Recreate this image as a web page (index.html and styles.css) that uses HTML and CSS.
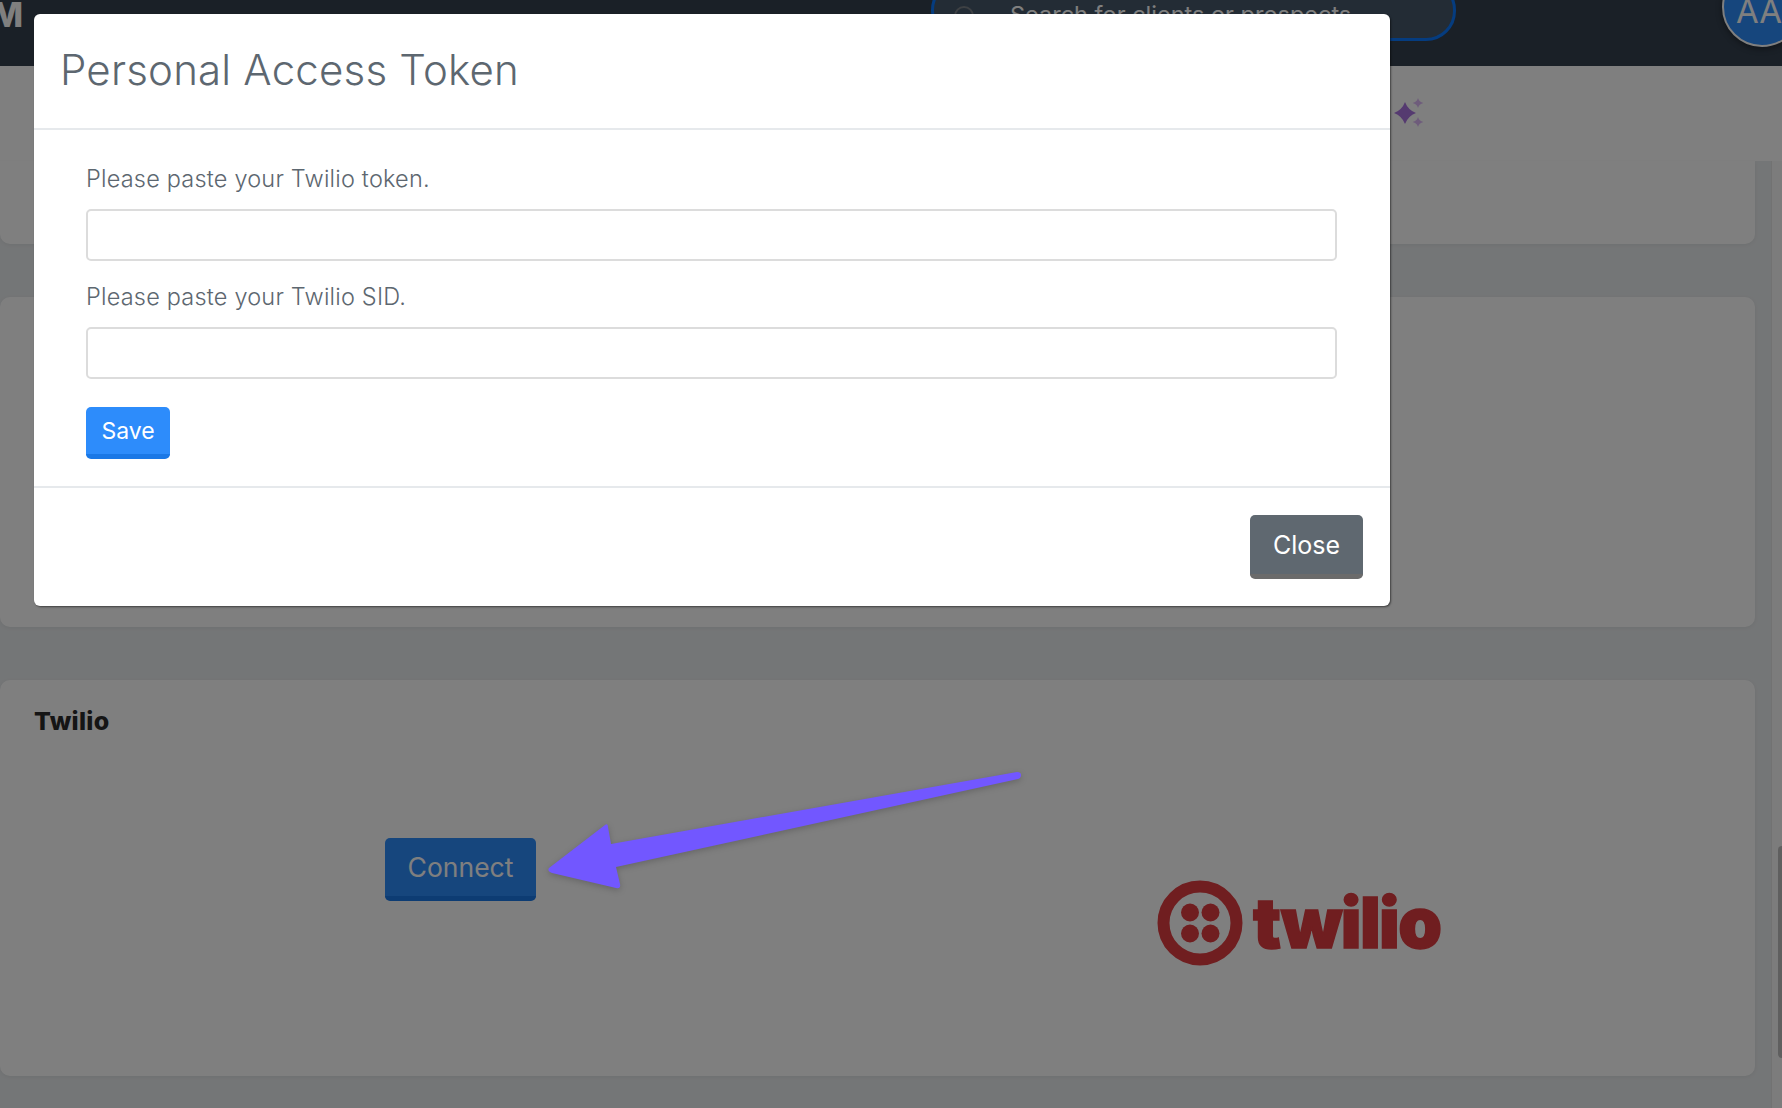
FILE: index.html
```html
<!DOCTYPE html>
<html lang="en">
<head>
    <meta charset="UTF-8">
    <meta name="viewport" content="width=device-width, initial-scale=1.0">
    <title>Personal Access Token</title>
    <link rel="stylesheet" href="styles.css">
</head>
<body>
    <!-- Top navigation -->
    <div class="navbar">
        <span class="brand">M</span>
        <div class="search">
            <svg class="search-icon" width="24" height="24" viewBox="0 0 24 24"><circle cx="11" cy="11" r="9" fill="none" stroke="#7c8288" stroke-width="2"/></svg>
            <span>Search for clients or prospects</span>
        </div>
        <div class="avatar">AA</div>
    </div>

    <div class="subbar">
        <svg class="sparkle" width="30" height="30" viewBox="0 0 30 30">
            <path d="M11 4Q14 12 22 15Q14 18 11 26Q8 18 0 15Q8 12 11 4Z" fill="#aa74e0"/>
            <path d="M24 0Q25 4 29.5 5Q25 6 24 10Q23 6 18.5 5Q23 4 24 0Z" fill="#dcb8f6"/>
            <path d="M24 19Q25 23 29.5 24Q25 25 24 29Q23 25 18.5 24Q23 23 24 19Z" fill="#dcb8f6"/>
        </svg>
    </div>

    <!-- Page content -->
    <div class="main">
        <div class="cards">
            <div class="card card-first"></div>
            <div class="card card-second"></div>
            <div class="card card-twilio">
                <h3>Twilio</h3>
                <div class="twilio-row">
                    <button class="btn btn-primary btn-connect">Connect</button>
                    <div class="logo">
                        <svg width="86" height="86" viewBox="0 0 86 86">
                            <circle cx="43" cy="43" r="36.5" fill="none" stroke="#e03c40" stroke-width="12"/>
                            <circle cx="33" cy="32.5" r="9" fill="#e03c40"/>
                            <circle cx="53.5" cy="32.5" r="9" fill="#e03c40"/>
                            <circle cx="33" cy="53.5" r="9" fill="#e03c40"/>
                            <circle cx="53.5" cy="53.5" r="9" fill="#e03c40"/>
                        </svg>
                        <span class="logo-text">twilio</span>
                    </div>
                </div>
            </div>
        </div>
        <div class="scrollbar"><div class="thumb"></div></div>
    </div>

    <div class="backdrop"></div>

    <!-- Modal -->
    <div class="modal">
        <div class="modal-header">
            <h2>Personal Access Token</h2>
        </div>
        <div class="modal-body">
            <label for="tokenInput">Please paste your Twilio token.</label>
            <input type="text" id="tokenInput">
            <label for="sidInput">Please paste your Twilio SID.</label>
            <input type="text" id="sidInput">
            <button class="btn btn-primary btn-save">Save</button>
        </div>
        <div class="modal-footer">
            <button class="btn btn-close">Close</button>
        </div>
    </div>

    <!-- Annotation arrow -->
    <svg class="arrow" width="1782" height="1108" viewBox="0 0 1782 1108">
        <path d="M549 868L605 825Q608 823 608 827L611 844L1017 772Q1021 772 1021 775Q1021 778 1018 779L616 867L620 884Q621 889 616 888L552 873Q547 871 549 868Z" fill="#7257ff"/>
    </svg>
</body>
</html>
```

FILE: styles.css
```css
* {
    box-sizing: border-box;
}

body {
    font-family: 'Inter', 'Open Sans', sans-serif;
    background-color: #e9ecee;
    margin: 0;
    height: 100vh;
    overflow: hidden;
    display: flex;
    flex-direction: column;
}

.navbar {
    height: 66px;
    background-color: #34404e;
    display: flex;
    align-items: flex-start;
    overflow: hidden;
    flex-shrink: 0;
}

.brand {
    color: #fff;
    font-size: 34px;
    font-weight: 800;
    line-height: 30px;
    margin-left: -9px;
    width: 940px;
    flex-shrink: 0;
}

.search {
    width: 525px;
    height: 61px;
    margin-top: -20px;
    flex-shrink: 0;
    border: 3px solid #0a78ff;
    border-radius: 30px;
    background-color: #46586a;
    color: #fff;
    font-size: 23.5px;
    display: flex;
    align-items: flex-end;
    padding: 0 0 10px 19px;
    gap: 33px;
}

.search-icon {
    margin-bottom: -1px;
    flex-shrink: 0;
}

.search span {
    line-height: 26px;
    white-space: nowrap;
}

.avatar {
    width: 80px;
    height: 80px;
    margin: -33px 0 0 266px;
    flex-shrink: 0;
    border: 2px solid #fff;
    border-radius: 50%;
    background-color: #2d8cfb;
    color: #fff;
    font-size: 33px;
    padding: 28px 0 0 12px;
    line-height: 28px;
    box-shadow: 0 2px 6px rgba(0, 0, 0, 0.4);
}

.subbar {
    height: 95px;
    background-color: #fff;
    padding: 32px 0 0 1394px;
    flex-shrink: 0;
}

.sparkle {
    display: block;
}

.main {
    flex: 1;
    display: flex;
    min-height: 0;
}

.cards {
    width: 1755px;
    display: flex;
    flex-direction: column;
    gap: 53px;
}

.card {
    background-color: #fff;
    border-radius: 10px;
    box-shadow: 0 1px 4px rgba(0, 0, 0, 0.06);
}

.card-first {
    height: 83px;
    border-radius: 0 0 10px 10px;
}

.card-second {
    height: 330px;
}

.card-twilio {
    height: 396px;
    padding: 27px 34px;
}

.card-twilio h3 {
    margin: 0;
    font-size: 25px;
    line-height: 28px;
    font-weight: 800;
    letter-spacing: 0.3px;
    color: #2a2a2a;
}

.twilio-row {
    display: flex;
    align-items: flex-start;
    margin: 103px 0 0 351px;
}

.logo {
    display: flex;
    align-items: center;
    gap: 10px;
    margin: 42px 0 0 621px;
}

.logo svg {
    display: block;
}

.logo-text {
    font-size: 70px;
    font-weight: 900;
    line-height: 86px;
    letter-spacing: -1.6px;
    color: #e03c40;
    -webkit-text-stroke: 1.5px #e03c40;
}

.scrollbar {
    width: 11px;
    margin-left: 16px;
    background-color: #f8f8f8;
    border-left: 1px solid #e4e4e4;
    padding: 685px 0 0 6px;
}

.thumb {
    width: 6px;
    height: 212px;
    background-color: #bebebe;
    border-radius: 4px 0 0 4px;
}

.btn {
    border: none;
    border-radius: 5px;
    color: #fff;
    font-family: inherit;
    padding: 0;
    display: block;
}

.btn-primary {
    background-color: #2d8cfb;
    border-bottom: 5px solid #1a78e6;
}

.btn-connect {
    width: 151px;
    height: 63px;
    font-size: 26.5px;
}

.btn-save {
    width: 84px;
    height: 52px;
    font-size: 23px;
}

.btn-close {
    width: 113px;
    height: 64px;
    font-size: 25px;
    background-color: #5f6870;
    border-bottom: 5px solid #6b6b6b;
}

.backdrop {
    position: absolute;
    inset: 0;
    background-color: rgba(0, 0, 0, 0.5);
}

.modal {
    position: absolute;
    left: 34px;
    top: 14px;
    width: 1356px;
    background-color: #fff;
    border-radius: 6px;
    box-shadow: 1px 1px 2px rgba(0, 0, 0, 0.5);
}

.modal-header {
    height: 116px;
    border-bottom: 2px solid #e6e9ec;
    padding: 31px 26px 0;
}

.modal-header h2 {
    margin: 0;
    font-size: 42px;
    line-height: 50px;
    font-weight: 350;
    letter-spacing: 0.2px;
    color: #5d6770;
}

.modal-body {
    height: 358px;
    padding: 34px 53px 0 52px;
    border-bottom: 2px solid #e6e9ec;
    display: flex;
    flex-direction: column;
}

.modal-body label {
    font-size: 23.5px;
    font-weight: 350;
    line-height: 30px;
    letter-spacing: 0.2px;
    color: #5d6770;
    height: 45px;
}

.modal-body input {
    height: 52px;
    border: 2px solid #dcdcdc;
    border-radius: 5px;
    margin-bottom: 21px;
    flex-shrink: 0;
}

.modal-body input + label + input {
    margin-bottom: 28px;
}

.modal-footer {
    height: 118px;
    display: flex;
    justify-content: flex-end;
    padding: 27px 27px 0 0;
}

.arrow {
    position: absolute;
    left: 0;
    top: 0;
    filter: drop-shadow(0 2px 3px rgba(0, 0, 0, 0.2));
}
```
